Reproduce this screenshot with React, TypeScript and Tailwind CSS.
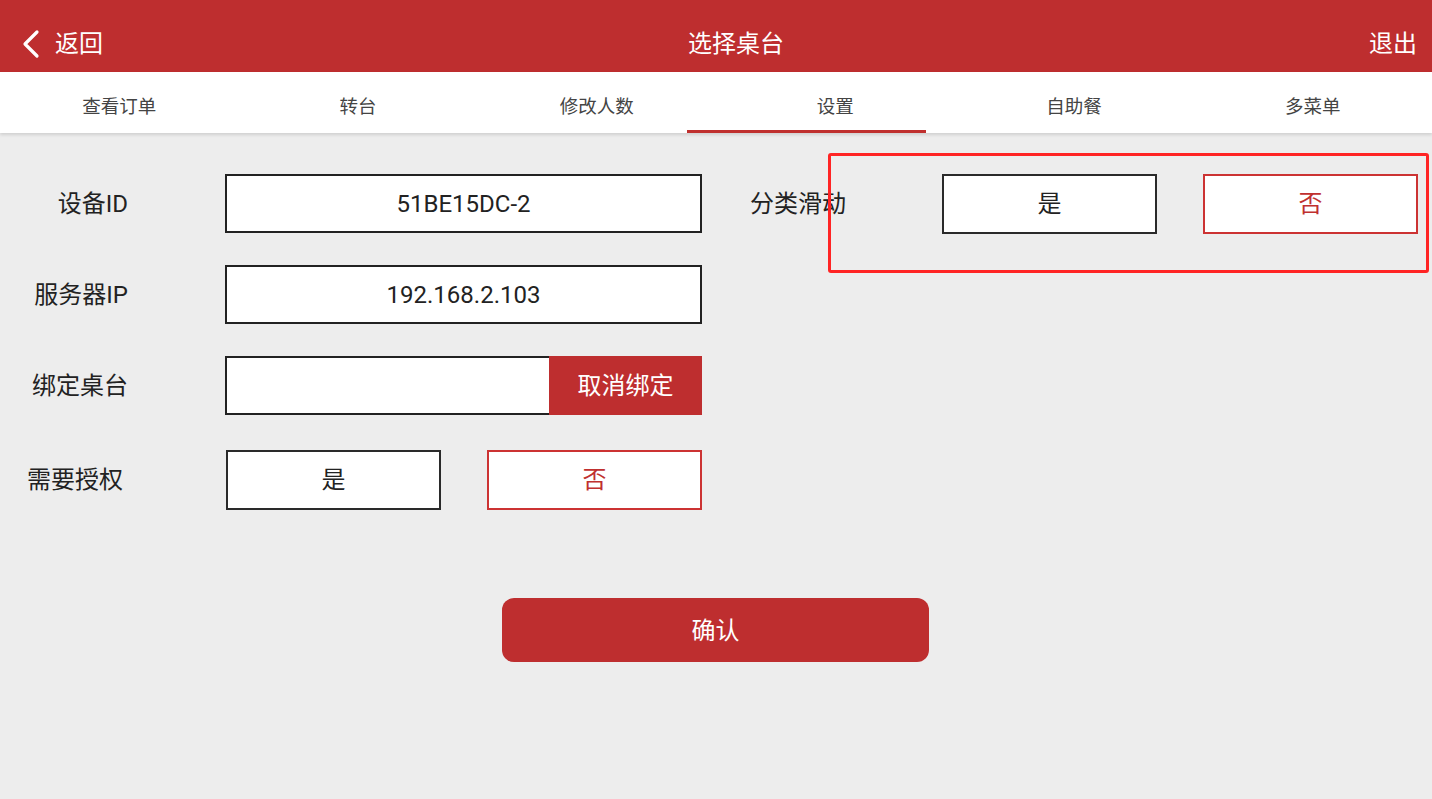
const tabs = ["查看订单", "转台", "修改人数", "设置", "自助餐", "多菜单"];

function YesNo({ className = "" }: { className?: string }) {
	return (
		<div className={`flex gap-[46px] ${className}`}>
			<button className="w-[215px] h-[60px] bg-white border-2 border-[#2a2a2a] text-[24px] text-[#222]">
				是
			</button>
			<button className="w-[215px] h-[60px] bg-white border-2 border-[#c33] text-[24px] text-[#c0302f]">
				否
			</button>
		</div>
	);
}

export default function App() {
	return (
		<div
			className="relative w-[1432px] h-[799px] bg-[#ededed] overflow-hidden"
			style={{ fontFamily: 'Roboto, "Noto Sans CJK SC", sans-serif' }}
		>
			{/* Header */}
			<div className="h-[72px] bg-[#be2e2f] grid grid-cols-[1fr_auto_1fr] items-center pt-[16px] text-white">
				<div className="flex items-center pl-[20px] gap-[13px]">
					<svg width="22" height="30" viewBox="0 0 22 30" fill="none">
						<path
							d="M17 3 L5 15 L17 27"
							stroke="white"
							strokeWidth="3.2"
							strokeLinecap="round"
							strokeLinejoin="round"
						/>
					</svg>
					<span className="text-[24px]">返回</span>
				</div>
				<div className="text-[24px] pl-[40px]">选择桌台</div>
				<div className="text-right pr-[15px] text-[24px]">退出</div>
			</div>

			{/* Tabs */}
			<div className="relative h-[61px] bg-white flex pt-[11px] shadow-[0_2px_3px_rgba(0,0,0,0.12)]">
				{tabs.map((t) => (
					<div
						key={t}
						className="flex-1 flex items-center justify-center text-[18.5px] text-[#444]"
					>
						{t}
					</div>
				))}
				<div className="absolute left-[687px] bottom-0 w-[239px] h-[3px] bg-[#c0302f]" />
			</div>

			{/* Content */}
			<div className="flex pt-[41px]">
				<div className="w-[702px] flex flex-col">
					<div className="flex items-center h-[59px]">
						<span className="w-[128px] text-right text-[24px] text-[#222]">设备ID</span>
						<div className="ml-[97px] w-[477px] h-[59px] bg-white border-2 border-[#222] flex items-center justify-center text-[24px] text-[#222]">
							51BE15DC-2
						</div>
					</div>
					<div className="flex items-center h-[59px] mt-[32px]">
						<span className="w-[128px] text-right text-[24px] text-[#222]">服务器IP</span>
						<div className="ml-[97px] w-[477px] h-[59px] bg-white border-2 border-[#222] flex items-center justify-center text-[24px] text-[#222]">
							192.168.2.103
						</div>
					</div>
					<div className="flex items-center h-[59px] mt-[32px]">
						<span className="w-[128px] text-right text-[24px] text-[#222]">绑定桌台</span>
						<div className="ml-[97px] w-[477px] h-[59px] flex">
							<div className="flex-1 bg-white border-2 border-r-0 border-[#222]" />
							<button className="w-[153px] bg-[#be2e2f] text-white text-[24px]">
								取消绑定
							</button>
						</div>
					</div>
					<div className="flex items-center h-[60px] mt-[35px]">
						<span className="w-[124px] text-right text-[24px] text-[#222]">需要授权</span>
						<YesNo className="ml-[103px]" />
					</div>
				</div>

				<div className="flex items-start">
					<div className="flex items-center h-[60px]">
						<span className="ml-[48px] w-[192px] text-[24px] text-[#222]">分类滑动</span>
						<YesNo />
					</div>
				</div>
			</div>

			{/* Confirm */}
			<button className="block ml-[502px] mt-[88px] w-[427px] h-[64px] rounded-[12px] bg-[#be2e2f] text-white text-[24px] pt-[2px]">
				确认
			</button>

			{/* Annotation box */}
			<div className="absolute left-[828px] top-[153px] w-[601px] h-[120px] border-[3px] border-[#ff2424] rounded-[3px]" />
		</div>
	);
}
